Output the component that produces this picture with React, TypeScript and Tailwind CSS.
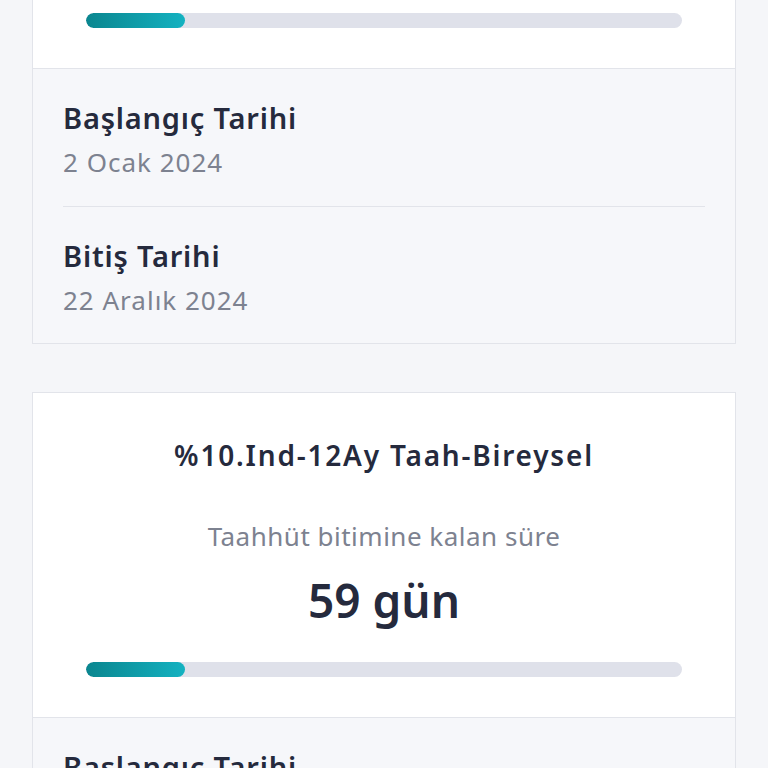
const CARDS = [
  {
    title: "%10.Ind-12Ay Taah-Bireysel",
    days: 59,
    progress: 16.6,
    start: "2 Ocak 2024",
    end: "22 Aralık 2024",
  },
  {
    title: "%10.Ind-12Ay Taah-Bireysel",
    days: 59,
    progress: 16.6,
    start: "2 Ocak 2024",
    end: "22 Aralık 2024",
  },
];

function DateRow({ label, value, last }: { label: string; value: string; last?: boolean }) {
  return (
    <div className={`pt-[31px] ${last ? "pb-[26px]" : "pb-[27px] border-b border-[#e2e4ea]"}`}>
      <div className="text-[29px] leading-[36px] font-semibold tracking-[0.8px] text-[#252a3d]">{label}</div>
      <div className="mt-[9px] text-[26px] leading-[34px] tracking-[1px] text-[#7d8290]">{value}</div>
    </div>
  );
}

function CommitmentCard({ card }: { card: (typeof CARDS)[number] }) {
  return (
    <div className="border border-[#e2e4ea] bg-white">
      {/* Top: remaining time */}
      <div className="px-[53px] pt-[44px] pb-[40px] text-center">
        <div className="text-[28px] leading-[36px] font-semibold tracking-[1.8px] text-[#252a3d]">{card.title}</div>
        <div className="mt-[45px] text-[26px] leading-[36px] tracking-[0.5px] text-[#7d8290]">
          Taahhüt bitimine kalan süre
        </div>
        <div className="mt-[18px] text-[46px] leading-[56px] font-semibold text-[#252a3d]">{card.days} gün</div>
        <div className="mt-[34px] h-[15px] rounded-full bg-[#dfe1ea] overflow-hidden">
          <div
            className="h-full rounded-full bg-gradient-to-r from-[#0a868f] to-[#14b2c1]"
            style={{ width: `${card.progress}%` }}
          />
        </div>
      </div>

      {/* Bottom: dates */}
      <div className="border-t border-[#e2e4ea] bg-[#f6f7fa] px-[30px]">
        <DateRow label="Başlangıç Tarihi" value={card.start} />
        <DateRow label="Bitiş Tarihi" value={card.end} last />
      </div>
    </div>
  );
}

export default function App() {
  return (
    <div
      className="min-h-screen bg-[#f5f6f9] overflow-hidden"
      style={{ fontFamily: "'Noto Sans', sans-serif" }}
    >
      <div className="mt-[-257px] px-8 flex flex-col gap-[48px] pb-10">
        {CARDS.map((card, i) => (
          <CommitmentCard key={i} card={card} />
        ))}
      </div>
    </div>
  );
}
